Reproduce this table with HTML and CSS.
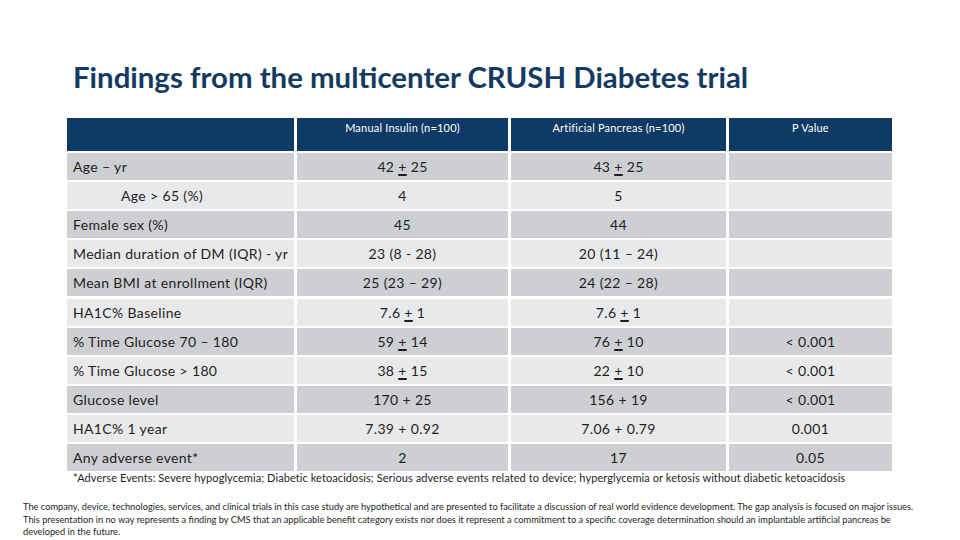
FILE: index.html
```html
<!DOCTYPE html>
<html>
<head>
<meta charset="utf-8">
<link rel="stylesheet" href="styles.css">
</head>
<body>
<div class="slide">
  <h1 class="title">Findings from the multicenter CRUSH Diabetes trial</h1>
  <div class="grid">
    <div class="hd"></div>
    <div class="hd">Manual Insulin (n=100)</div>
    <div class="hd">Artificial Pancreas (n=100)</div>
    <div class="hd">P Value</div>

    <div class="c lbl dk"><span>Age – yr</span></div><div class="c dk"><span>42 <u>+</u> 25</span></div><div class="c dk"><span>43 <u>+</u> 25</span></div><div class="c dk"></div>
    <div class="c lbl lt indent"><span>Age &gt; 65 (%)</span></div><div class="c lt"><span>4</span></div><div class="c lt"><span>5</span></div><div class="c lt"></div>
    <div class="c lbl dk"><span>Female sex (%)</span></div><div class="c dk"><span>45</span></div><div class="c dk"><span>44</span></div><div class="c dk"></div>
    <div class="c lbl lt"><span>Median duration of DM (IQR) - yr</span></div><div class="c lt"><span>23 (8 - 28)</span></div><div class="c lt"><span>20 (11 – 24)</span></div><div class="c lt"></div>
    <div class="c lbl dk"><span>Mean BMI at enrollment (IQR)</span></div><div class="c dk"><span>25 (23 – 29)</span></div><div class="c dk"><span>24 (22 – 28)</span></div><div class="c dk"></div>
    <div class="c lbl lt"><span>HA1C% Baseline</span></div><div class="c lt"><span>7.6 <u>+</u> 1</span></div><div class="c lt"><span>7.6 <u>+</u> 1</span></div><div class="c lt"></div>
    <div class="c lbl dk"><span>% Time Glucose 70 – 180</span></div><div class="c dk"><span>59 <u>+</u> 14</span></div><div class="c dk"><span>76 <u>+</u> 10</span></div><div class="c dk"><span>&lt; 0.001</span></div>
    <div class="c lbl lt"><span>% Time Glucose &gt; 180</span></div><div class="c lt"><span>38 <u>+</u> 15</span></div><div class="c lt"><span>22 <u>+</u> 10</span></div><div class="c lt"><span>&lt; 0.001</span></div>
    <div class="c lbl dk"><span>Glucose level</span></div><div class="c dk"><span>170 + 25</span></div><div class="c dk"><span>156 + 19</span></div><div class="c dk"><span>&lt; 0.001</span></div>
    <div class="c lbl lt"><span>HA1C% 1 year</span></div><div class="c lt"><span>7.39 + 0.92</span></div><div class="c lt"><span>7.06 + 0.79</span></div><div class="c lt"><span>0.001</span></div>
    <div class="c lbl dk"><span>Any adverse event*</span></div><div class="c dk"><span>2</span></div><div class="c dk"><span>17</span></div><div class="c dk"><span>0.05</span></div>
  </div>
  <p class="note">*Adverse Events: Severe hypoglycemia; Diabetic ketoacidosis; Serious adverse events related to device; hyperglycemia or ketosis without diabetic ketoacidosis</p>
  <p class="disclaimer">The company, device, technologies, services, and clinical trials in this case study are hypothetical and are presented to facilitate a discussion of real world evidence development. The gap analysis is focused on major issues.<br>This presentation in no way represents a finding by CMS that an applicable benefit category exists nor does it represent a commitment to a specific coverage determination should an implantable artificial pancreas be<br>developed in the future.</p>
</div>
</body>
</html>
```
FILE: styles.css
```css
html, body {
  margin: 0;
  padding: 0;
  background: #ffffff;
}
.slide {
  width: 960px;
  height: 540px;
  overflow: hidden;
  font-family: Lato, "Liberation Sans", sans-serif;
  color: #1e1e1e;
  display: flex;
  flex-direction: column;
}
.title {
  margin: 58px 0 0 73px;
  font-size: 29.4px;
  line-height: 37px;
  font-weight: 700;
  color: #133a60;
}
.grid {
  margin: 23px 0 0 67px;
  display: grid;
  grid-template-columns: 227px 211px 215px 163px;
  grid-template-rows: 33px repeat(11, 27px);
  column-gap: 3px;
  row-gap: 2.1px;
  font-size: 14px;
  letter-spacing: 0.35px;
}
.hd {
  background: #0e3a66;
  color: #ffffff;
  font-size: 11px;
  letter-spacing: 0.2px;
  text-align: center;
  padding-top: 3px;
}
.c {
  display: flex;
  align-items: center;
  justify-content: center;
  white-space: pre;
}
.c.lbl {
  justify-content: flex-start;
  padding-left: 6px;
}
.c.indent {
  padding-left: 54px;
}
.dk { background: #cdcfd2; }
.lt { background: #e8e9ea; }
u {
  text-decoration-thickness: 1.5px;
  text-underline-offset: 2px;
}
.note {
  margin: 1px 0 0 73px;
  font-size: 11px;
  line-height: 12px;
  letter-spacing: 0.08px;
  white-space: nowrap;
}
.disclaimer {
  margin: 17px 0 0 23px;
  font-size: 9.25px;
  line-height: 12.5px;
  white-space: nowrap;
}
```
